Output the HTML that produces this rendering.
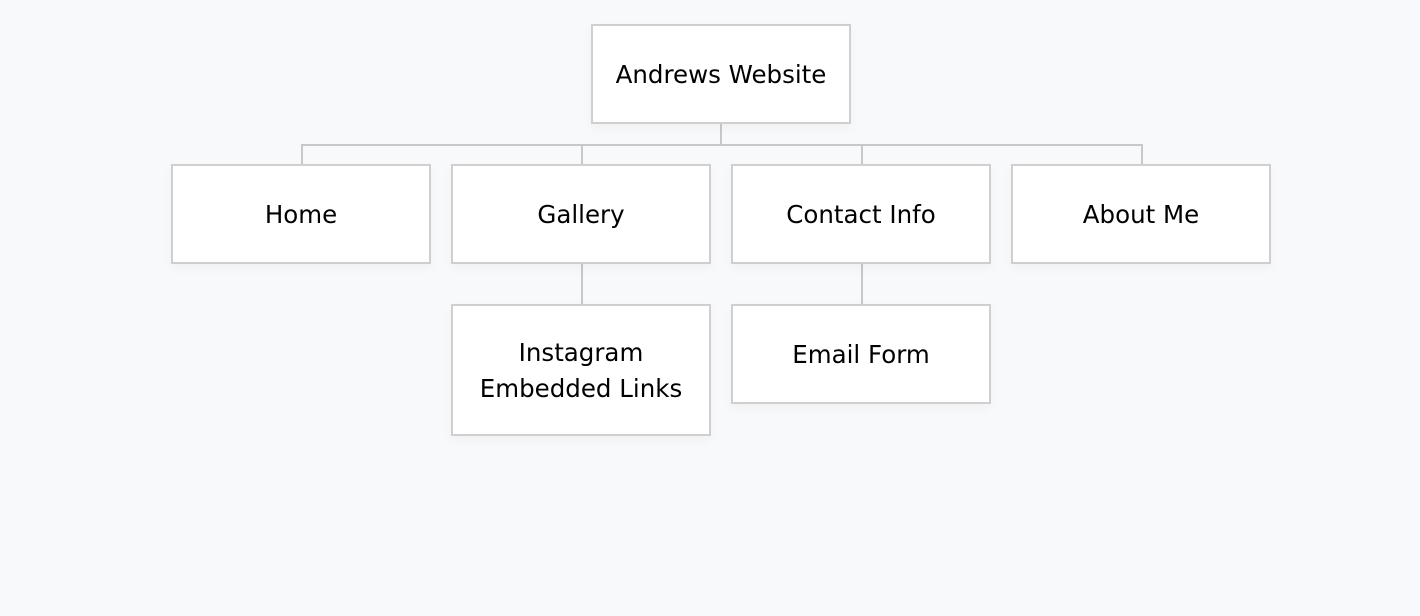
<!DOCTYPE html>
<html><head><style>
body{margin:0;width:1420px;height:616px;background:#f8f9fb;position:relative;overflow:hidden;font-family:"DejaVu Sans",sans-serif;}
.b{position:absolute;box-sizing:border-box;background:#fff;border:2px solid #cfcfcf;display:flex;align-items:center;justify-content:center;text-align:center;font-size:24.5px;line-height:36px;color:#000;box-shadow:0 4px 10px rgba(0,0,0,0.04);padding-top:2px;}
.l{position:absolute;background:#c8c8c8;}
</style></head><body>
<div class="l" style="left:720px;top:123px;width:2px;height:22px"></div>
<div class="l" style="left:301px;top:144px;width:842px;height:2px"></div>
<div class="l" style="left:301px;top:144px;width:2px;height:21px"></div>
<div class="l" style="left:581px;top:144px;width:2px;height:21px"></div>
<div class="l" style="left:861px;top:144px;width:2px;height:21px"></div>
<div class="l" style="left:1141px;top:144px;width:2px;height:21px"></div>
<div class="l" style="left:581px;top:263px;width:2px;height:42px"></div>
<div class="l" style="left:861px;top:263px;width:2px;height:42px"></div>
<div class="b" style="left:591px;top:24px;width:260px;height:100px">Andrews Website</div>
<div class="b" style="left:171px;top:164px;width:260px;height:100px">Home</div>
<div class="b" style="left:451px;top:164px;width:260px;height:100px">Gallery</div>
<div class="b" style="left:731px;top:164px;width:260px;height:100px">Contact Info</div>
<div class="b" style="left:1011px;top:164px;width:260px;height:100px">About Me</div>
<div class="b" style="left:451px;top:304px;width:260px;height:132px">Instagram<br>Embedded Links</div>
<div class="b" style="left:731px;top:304px;width:260px;height:100px">Email Form</div>
</body></html>
